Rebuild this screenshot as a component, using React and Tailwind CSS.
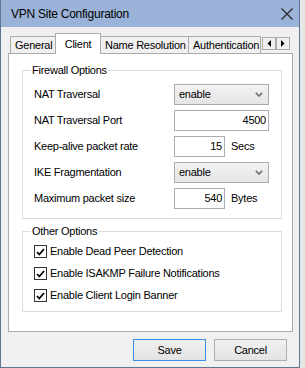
const tabs = [
  { label: 'General', w: 'w-[46px]' },
  { label: 'Client', w: 'w-[46px]', active: true },
  { label: 'Name Resolution', w: 'w-[89px]' },
  { label: 'Authentication', w: 'w-[73px]' },
]

function Chevron() {
  return (
    <svg width="8" height="5" viewBox="0 0 8 5">
      <path d="M0.8 0.8 L4 4 L7.2 0.8" fill="none" stroke="#6b6b6b" strokeWidth="1.6" />
    </svg>
  )
}

function Select({ value }) {
  return (
    <div className="w-[95px] h-[21px] border border-[#acacac] bg-linear-to-b from-[#f2f2f2] to-[#e5e5e5] flex items-center justify-between pl-[4px] pr-[5px]">
      <span>{value}</span>
      <Chevron />
    </div>
  )
}

function Input({ value, w = 'w-[95px]' }) {
  return (
    <div className={`${w} h-[21px] border border-[#abadb3] bg-white text-right pr-[2px] leading-[19px]`}>
      {value}
    </div>
  )
}

function Row({ label, children, unit }) {
  return (
    <div className="flex items-center h-[21px]">
      <span className="w-[140px]">{label}</span>
      {children}
      {unit && <span className="ml-[6px]">{unit}</span>}
    </div>
  )
}

function Check({ label }) {
  return (
    <div className="flex items-center h-[13px] gap-[3px]">
      <div className="w-[13px] h-[13px] border border-[#333] bg-white flex items-center justify-center">
        <svg width="9" height="8" viewBox="0 0 9 8">
          <path d="M1 4 L3.3 6.5 L8 1" fill="none" stroke="#000" strokeWidth="1.8" />
        </svg>
      </div>
      <span>{label}</span>
    </div>
  )
}

function Arrow({ dir }) {
  return (
    <div className="w-[14px] h-[13px] border border-[#acacac] bg-[#f0f0f0] flex items-center justify-center">
      <svg width="4" height="7" viewBox="0 0 4 7">
        {dir === 'left' ? <polygon points="4,0 4,7 0.5,3.5" fill="#000" /> : <polygon points="0,0 0,7 3.5,3.5" fill="#000" />}
      </svg>
    </div>
  )
}

export default function App() {
  return (
    <div className="w-[305px] h-[368px] bg-[#e6e6e6] flex overflow-hidden font-['Liberation_Sans',Arial,sans-serif] text-[11px] tracking-[-0.25px] text-black">
      <div className="w-[300px] h-[368px] flex flex-col bg-[#f0f0f0] border-l border-r border-b border-[#5f7393]">
        <div className="h-[27px] shrink-0 bg-[#9bb3d8] flex items-center justify-between pl-[10px] pr-[6px]">
          <span className="text-[12px]">VPN Site Configuration</span>
          <svg width="12" height="12" viewBox="0 0 12 12">
            <path d="M0.5 0.5 L11.5 11.5 M11.5 0.5 L0.5 11.5" stroke="#222" strokeWidth="1.1" />
          </svg>
        </div>

        <div className="px-[7px]">
          <div className="h-[26px] flex items-end pl-[3px]">
            {tabs.map((t) =>
              t.active ? (
                <div
                  key={t.label}
                  className={`${t.w} h-[21px] -mb-px -ml-[1px] relative z-10 bg-white border border-b-0 border-[#acacac] flex justify-center pt-[2px]`}
                >
                  {t.label}
                </div>
              ) : (
                <div
                  key={t.label}
                  className={`${t.w} h-[17px] bg-[#f0f0f0] border border-b-0 border-[#acacac] -ml-px flex items-center pl-[4px] overflow-hidden whitespace-nowrap`}
                >
                  {t.label}
                </div>
              )
            )}
            <div className="flex self-start mt-[10px] ml-[1px]">
              <Arrow dir="left" />
              <Arrow dir="right" />
            </div>
          </div>

          <div className="w-[285px] h-[279px] bg-white border border-[#acacac] pt-[10px] pl-[13px]">
            <fieldset className="w-[260px] border border-[#dcdcdc] pl-[11px] pt-[7px] pb-[9px]">
              <legend className="ml-[-3px] px-[1px] leading-[13px]">Firewall Options</legend>
              <div className="flex flex-col gap-[5px]">
                <Row label="NAT Traversal">
                  <Select value="enable" />
                </Row>
                <Row label="NAT Traversal Port">
                  <Input value="4500" />
                </Row>
                <Row label="Keep-alive packet rate" unit="Secs">
                  <Input value="15" w="w-[51px]" />
                </Row>
                <Row label="IKE Fragmentation">
                  <Select value="enable" />
                </Row>
                <Row label="Maximum packet size" unit="Bytes">
                  <Input value="540" w="w-[51px]" />
                </Row>
              </div>
            </fieldset>

            <fieldset className="w-[260px] mt-[6px] border border-[#dcdcdc] pl-[11px] pt-[7px] pb-[9px]">
              <legend className="ml-[-3px] px-[1px] leading-[13px]">Other Options</legend>
              <div className="flex flex-col gap-[9px]">
                <Check label="Enable Dead Peer Detection" />
                <Check label="Enable ISAKMP Failure Notifications" />
                <Check label="Enable Client Login Banner" />
              </div>
            </fieldset>
          </div>

          <div className="flex justify-end gap-[8px] mt-[7px] pr-[5px]">
            <button className="w-[73px] h-[22px] border border-[#3c8ee6] bg-linear-to-b from-[#f0f0f0] to-[#e3e3e3]">
              Save
            </button>
            <button className="w-[73px] h-[22px] border border-[#adadad] bg-linear-to-b from-[#f0f0f0] to-[#e3e3e3]">
              Cancel
            </button>
          </div>
        </div>
      </div>
    </div>
  )
}
